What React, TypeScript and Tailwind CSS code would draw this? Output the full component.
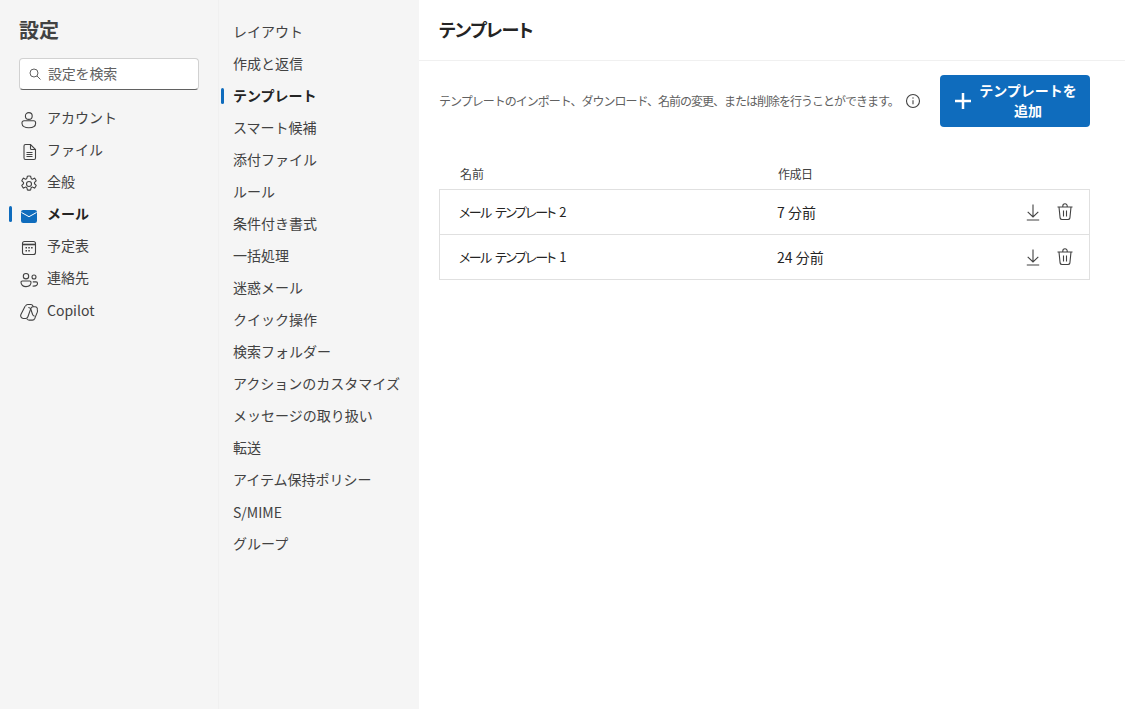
import React from "react";

const font = { fontFamily: '"Noto Sans CJK JP", "Noto Sans", sans-serif' };
const stroke = "#424242";

function Svg({ children }: { children: React.ReactNode }) {
  return (
    <svg width="20" height="20" viewBox="0 0 20 20" fill="none" stroke={stroke} strokeWidth="1.1">
      {children}
    </svg>
  );
}

const UserIcon = () => (
  <Svg>
    <circle cx="9.800" cy="6" r="3.400" />
    <path d="M5 10.800h9.600a2 2 0 0 1 2 2v.7c0 2.600-2.900 4.200-6.800 4.200s-6.800-1.600-6.800-4.200v-.7a2 2 0 0 1 2-2z" />
  </Svg>
);
const FileIcon = () => (
  <Svg>
    <path d="M6 2.500h5l5 5v8.500a1.500 1.500 0 0 1-1.500 1.500h-8.500a1.500 1.500 0 0 1-1.500-1.500v-12a1.500 1.500 0 0 1 1.500-1.500z" transform="translate(.5 0)" />
    <path d="M11.500 2.500v4a1 1 0 0 0 1 1h4M7.500 10.500h6M7.500 12.500h6M7.500 14.500h6" />
  </Svg>
);
const GearIcon = () => (
  <Svg>
    <path d="M8.400 2.300c1-.3 2.200-.3 3.200 0l.5 1.900a1.200 1.200 0 0 0 1.800.8l1.700-.9c.7.800 1.300 1.800 1.600 2.800l-1.400 1.300a1.200 1.200 0 0 0 0 1.800l1.400 1.300c-.3 1-.9 2-1.600 2.800l-1.700-.9a1.200 1.200 0 0 0-1.800.8l-.5 1.900c-1 .3-2.200.3-3.200 0l-.5-1.900a1.200 1.200 0 0 0-1.800-.8l-1.700.9c-.7-.8-1.300-1.800-1.600-2.800l1.400-1.300a1.200 1.200 0 0 0 0-1.800L2.800 6.900c.3-1 .9-2 1.600-2.800l1.700.9a1.200 1.200 0 0 0 1.800-.8z" />
    <circle cx="10" cy="10" r="2.500" />
  </Svg>
);
const MailIcon = () => (
  <svg width="20" height="20" viewBox="0 0 20 20" fill="none">
    <rect x="2" y="4" width="16" height="13" rx="2.200" fill="#0f6cbd" />
    <path d="M2.500 6.500 10 10.700l7.500-4.200" stroke="white" strokeWidth="1" />
  </svg>
);
const CalendarIcon = () => (
  <Svg>
    <rect x="3.500" y="3.500" width="13" height="13" rx="2" />
    <path d="M3.500 6.500h13" strokeWidth="1.600" />
    <g fill={stroke} stroke="none">
      <rect x="6.500" y="9" width="1.500" height="1.500" />
      <rect x="9.300" y="9" width="1.500" height="1.500" />
      <rect x="12.100" y="9" width="1.500" height="1.500" />
      <rect x="6.500" y="12" width="1.500" height="1.500" />
      <rect x="9.300" y="12" width="1.500" height="1.500" />
    </g>
  </Svg>
);
const PeopleIcon = () => (
  <Svg>
    <circle cx="7" cy="6.200" r="2.700" />
    <circle cx="15" cy="7" r="2" />
    <path d="M3.300 11h7.400a1.300 1.300 0 0 1 1.300 1.300c0 2.700-2.200 4.300-5 4.300s-5-1.600-5-4.300A1.300 1.300 0 0 1 3.300 11z" />
    <path d="M13.600 16c.4.100.8.100 1.200.100 2 0 3.700-.9 3.700-2.800 0-.8-.6-1.400-1.400-1.400h-3.300" />
  </Svg>
);
const CopilotIcon = () => (
  <Svg>
    <path d="M6.500 4.200c.4-1.100 1.300-1.700 2.300-1.700h3.100c1 0 1.700.5 2 1.500l.3 1" />
    <path d="M6.500 4.200 2.300 12.500c-.8 1.600.3 4 2.400 4h2.400c1 0 1.800-.6 2.200-1.700l2.900-8.200c.4-1.100 1.300-1.800 2.400-1.800h1.800c1.800 0 2.800 1.500 2.200 3.100" transform="translate(-.4 0)" />
    <path d="M18.300 8c.5 1 .2 1.400 0 2.200l-2.500 6.200c-.5 1.100-1.300 1.700-2.400 1.700h-3.300c-1.200 0-2-.6-2.400-1.500" />
    <path d="M9.300 5.500c1.200 0 2.100.7 2.500 1.800l1.800 5.200c.4 1 1.100 1.500 2 1.700" />
  </Svg>
);

const accounts: [string, React.ReactNode, boolean?][] = [
  ["アカウント", <UserIcon />],
  ["ファイル", <FileIcon />],
  ["全般", <GearIcon />],
  ["メール", <MailIcon />, true],
  ["予定表", <CalendarIcon />],
  ["連絡先", <PeopleIcon />],
  ["Copilot", <CopilotIcon />],
];

const sections = [
  "レイアウト",
  "作成と返信",
  "テンプレート",
  "スマート候補",
  "添付ファイル",
  "ルール",
  "条件付き書式",
  "一括処理",
  "迷惑メール",
  "クイック操作",
  "検索フォルダー",
  "アクションのカスタマイズ",
  "メッセージの取り扱い",
  "転送",
  "アイテム保持ポリシー",
  "S/MIME",
  "グループ",
];

const rows = [
  ["メール テンプレート 2", "7 分前"],
  ["メール テンプレート 1", "24 分前"],
];

const Download = () => (
  <svg width="20" height="20" viewBox="0 0 20 20" fill="none" stroke={stroke} strokeWidth="1.100">
    <path d="M10 2.500v12.500M4.700 9.800 10 15l5.300-5.200M3.800 18h12.400" />
  </svg>
);
const Trash = () => (
  <svg width="20" height="20" viewBox="0 0 20 20" fill="none" stroke={stroke} strokeWidth="1.100">
    <path d="M2.500 5h15M7.800 5V4a2.200 2.200 0 0 1 4.400 0v1M4 5l1.100 11a2 2 0 0 0 2 1.500h5.800a2 2 0 0 0 2-1.500L16 5M8.500 8.500v6M11.500 8.500v6" />
  </svg>
);

export default function App() {
  return (
    <div className="flex h-[709px] w-[1125px] overflow-hidden bg-white text-[#242424]" style={font}>
      <aside className="flex w-[219px] shrink-0 flex-col border-r border-[#f0f0f0] bg-[#f5f5f5] pl-[19px] pr-[19px]">
        <h1 className="mt-[16px] text-[20px] font-semibold leading-[28px] text-[#424242]">設定</h1>
        <div className="mt-[14px] flex h-[32px] items-center gap-[6px] rounded-[4px] border border-[#d1d1d1] border-b-[#616161] bg-white pl-[8px]">
          <svg width="14" height="14" viewBox="0 0 14 14" fill="none" stroke="#616161" strokeWidth="1">
            <circle cx="6" cy="6" r="4" />
            <path d="m9 9 3.500 3.500" />
          </svg>
          <span className="pb-[2px] text-[14px] leading-none tracking-[-0.2px] text-[#616161]">設定を検索</span>
        </div>
        <nav className="mt-[12px] flex flex-col">
          {accounts.map(([label, icon, active]) => (
            <div key={label} className="relative flex h-[32px] items-center gap-[8px]">
              {active && <span className="absolute left-[-10px] top-[8px] h-[16px] w-[3px] rounded-full bg-[#0f6cbd]" />}
              <span className="flex h-[20px] w-[20px] translate-y-[2px] items-center justify-center">{icon}</span>
              <span
                className={`${label === "Copilot" ? "" : "pb-[2px]"} ${
                  active ? "text-[14px] font-bold leading-none text-[#242424]" : "text-[14px] leading-none text-[#424242]"
                }`}
              >
                {label}
              </span>
            </div>
          ))}
        </nav>
      </aside>

      <aside className="flex w-[200px] shrink-0 flex-col bg-[#f5f5f5] pl-[14px] pt-[16px]">
        {sections.map((s) => {
          const active = s === "テンプレート";
          return (
            <div key={s} className="relative flex h-[32px] items-center">
              {active && <span className="absolute left-[-12px] top-[8px] h-[16px] w-[3px] rounded-full bg-[#0f6cbd]" />}
              <span
                className={`${s === "S/MIME" ? "pb-[1px]" : "pb-[2px]"} ${
                  active ? "text-[14px] font-bold leading-none text-[#242424]" : "text-[14px] leading-none text-[#424242]"
                }`}
              >
                {s}
              </span>
            </div>
          );
        })}
      </aside>

      <main className="flex min-w-0 flex-1 flex-col">
        <header className="flex h-[61px] items-center border-b border-[#f0f0f0] pl-[20px]">
          <h2 className="pb-[2px] text-[18px] font-semibold leading-[28px] tracking-[-0.8px] text-[#242424] [font-feature-settings:'palt']">
            テンプレート
          </h2>
        </header>
        <div className="flex flex-col pl-[20px] pr-[35px]">
          <div className="mt-[14px] flex h-[52px] items-center justify-between">
            <div className="flex items-center gap-[6px]">
              <span className="whitespace-nowrap text-[12px] leading-none tracking-[-1px] text-[#616161]">
                テンプレートのインポート、ダウンロード、名前の変更、または削除を行うことができます。
              </span>
              <svg width="16" height="16" viewBox="0 0 16 16" fill="none" stroke={stroke} strokeWidth="1.100">
                <circle cx="8" cy="8" r="6.500" />
                <path d="M8 7.200v4" />
                <circle cx="8" cy="5" r="0.700" fill={stroke} stroke="none" />
              </svg>
            </div>
            <button className="flex h-[52px] w-[150px] items-center rounded-[4px] bg-[#0f6cbd] pl-[13px] pr-[12px] text-white">
              <svg width="20" height="20" viewBox="0 0 20 20" fill="none" stroke="white" strokeWidth="2.500" className="shrink-0">
                <path d="M10 2v16M2 10h16" />
              </svg>
              <span className="ml-[5px] flex-1 pb-[2px] text-center text-[14px] font-semibold leading-[20px]">
                テンプレートを
                <br />
                追加
              </span>
            </button>
          </div>

          <div className="mt-[36px] flex h-[26px] items-center pb-[5px] text-[12px] leading-none text-[#424242]">
            <span className="w-[339px] pl-[21px]">名前</span>
            <span className="tracking-[-0.5px]">作成日</span>
          </div>
          <div className="border border-[#e0e0e0]">
            {rows.map(([name, when], i) => (
              <div key={name} className={i === 0 ? "flex h-[45px] items-center border-b border-[#e0e0e0]" : "flex h-[44px] items-center"}>
                <span className="w-[337px] pl-[19px] pb-[1px] text-[13px] leading-none tracking-[-1.55px] text-[#242424] [font-feature-settings:'palt'] [word-spacing:3px]">
                  {name}
                </span>
                <span className="text-[14px] leading-none text-[#242424]">{when}</span>
                <span className="ml-auto flex items-center gap-[12px] pr-[14px]">
                  <Download />
                  <Trash />
                </span>
              </div>
            ))}
          </div>
        </div>
      </main>
    </div>
  );
}
